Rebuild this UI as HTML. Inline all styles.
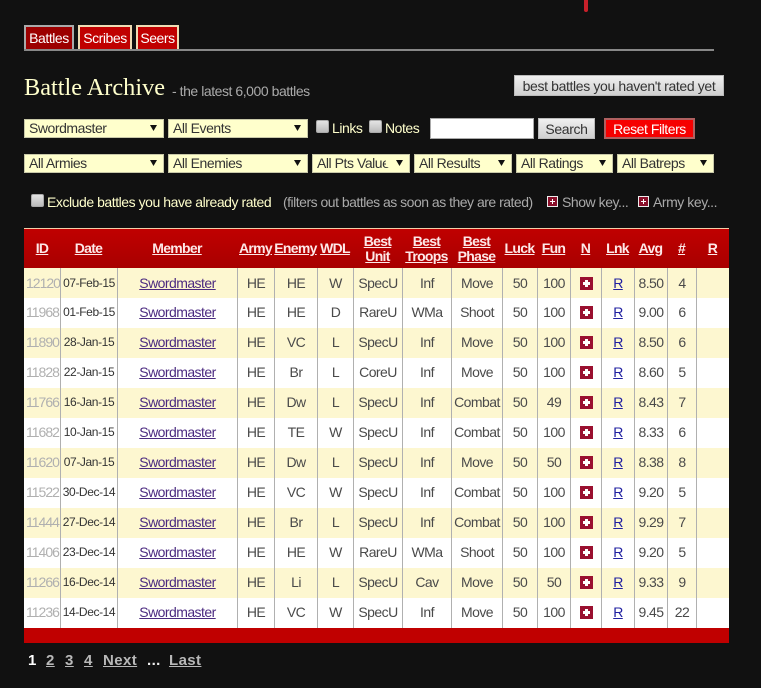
<!DOCTYPE html>
<html>
<head>
<meta charset="utf-8">
<style>
html,body{margin:0;padding:0;background:#111;}
body{width:761px;height:688px;position:relative;overflow:hidden;font-family:"Liberation Sans",sans-serif;font-size:14px;letter-spacing:-.45px;color:#333;}
.a{position:absolute;white-space:nowrap;box-sizing:border-box;}
.tab{top:25px;height:24px;line-height:22px;color:#fff;font-size:14px;text-align:center;background:#c00000;border:2px solid #efdcb4;border-bottom:0;}
.sel{height:19px;background:#ffffcc;border:1px solid #c8c8a8;color:#333;font-size:14px;line-height:17px;padding-left:4px;overflow:hidden;}
.sel svg{position:absolute;right:6px;top:4px;background:#ffffcc;}
.chk{width:13px;height:13px;background:linear-gradient(#e4e4e4,#bbb);border:1px solid #aaa;border-radius:2px;}
.lbl{color:#ffffcc;font-size:14px;line-height:16px;}
.gray{color:#aaa;font-size:14px;line-height:16px;}
.btn{background:linear-gradient(#f0f0f0,#cfcfcf);border:1px solid #bbb;color:#333;font-size:14px;text-align:center;letter-spacing:-.36px;}
.pl{width:11px;height:11px;background:#8a0f2a;border:1px solid #eee;box-sizing:border-box;}
.pl:before,.pl:after{content:"";position:absolute;background:#fff;}
.pl:before{left:2px;top:4px;width:5px;height:1px;}
.pl:after{left:4px;top:2px;width:1px;height:5px;}
table{position:absolute;left:24px;top:228px;width:705px;border-collapse:separate;border-spacing:0;table-layout:fixed;}
th{height:39px;padding:0;background:linear-gradient(#c00000,#a80000);border-top:1px solid #f2cfa8;color:#fde8e8;font-size:14px;letter-spacing:-.7px;line-height:15px;text-decoration:underline;font-weight:bold;}
td{height:30px;padding:0;text-align:center;border-left:1px solid #b0b0b0;font-size:14px;letter-spacing:-.55px;color:#4a4a4a;white-space:nowrap;overflow:visible;box-sizing:border-box;}
tbody tr:not(:first-child) td{padding-bottom:2px;}
td:first-child{border-left:0;color:#b0b0b0;font-size:14px;letter-spacing:-1px;text-align:left;padding-left:2px;}
tr.o td{background:#fdf7d0;}
tr.e td{background:#fff;}
td.d{font-size:12px;letter-spacing:-.4px;color:#333;}
td.m{color:#4b2a80;text-decoration:underline;}
td.r{color:#2020a0;text-decoration:underline;}
.n{display:inline-block;width:13px;height:13px;background:#9a1030;position:relative;vertical-align:-2px;}
.n:before,.n:after{content:"";position:absolute;background:#fff;}
.n:before{left:3px;top:5px;width:7px;height:3px;}
.n:after{left:5px;top:3px;width:3px;height:7px;}
tfoot td{height:15px;background:#c00000;border:0!important;}
.pg{top:652px;font-size:15px;font-weight:bold;color:#b8b8b8;text-decoration:underline;letter-spacing:.4px;}
</style>
</head>
<body>
<div class="a" style="left:584px;top:0;width:4px;height:12px;background:#c8202a;border-radius:0 0 2px 2px;"></div>

<div class="a tab" style="left:24px;width:50px;background:#9c0000;border-color:#aaa;">Battles</div>
<div class="a tab" style="left:78px;width:54px;">Scribes</div>
<div class="a tab" style="left:136px;width:43px;">Seers</div>
<div class="a" style="left:24px;top:49px;width:690px;height:2px;background:#888;"></div>

<div class="a" style="left:24px;top:73px;font-family:'Liberation Serif',serif;font-size:24.3px;letter-spacing:0;line-height:30px;color:#ffffcc;">Battle Archive</div>
<div class="a gray" style="left:172px;top:83px;">- the latest 6,000 battles</div>
<div class="a btn" style="left:514px;top:75px;width:210px;height:21px;line-height:20px;">best battles you haven't rated yet</div>

<div class="a sel" style="left:24px;top:119px;width:140px;">Swordmaster<svg width="7" height="8"><path d="M0 1h7l-3.500 6z" fill="#111"/></svg></div>
<div class="a sel" style="left:168px;top:119px;width:140px;">All Events<svg width="7" height="8"><path d="M0 1h7l-3.500 6z" fill="#111"/></svg></div>
<div class="a chk" style="left:316px;top:120px;"></div>
<div class="a lbl" style="left:332px;top:120px;">Links</div>
<div class="a chk" style="left:369px;top:120px;"></div>
<div class="a lbl" style="left:385px;top:120px;">Notes</div>
<div class="a" style="left:430px;top:118px;width:104px;height:21px;background:#fff;border:1px solid #aaa;"></div>
<div class="a btn" style="left:538px;top:118px;width:57px;height:21px;line-height:20px;">Search</div>
<div class="a" style="left:604px;top:118px;width:91px;height:21px;line-height:18px;background:#f60000;border:2px solid #b06060;color:#fff;font-size:14px;text-align:center;">Reset Filters</div>

<div class="a sel" style="left:24px;top:154px;width:140px;">All Armies<svg width="7" height="8"><path d="M0 1h7l-3.500 6z" fill="#111"/></svg></div>
<div class="a sel" style="left:168px;top:154px;width:140px;">All Enemies<svg width="7" height="8"><path d="M0 1h7l-3.500 6z" fill="#111"/></svg></div>
<div class="a sel" style="left:312px;top:154px;width:98px;">All Pts Value<svg width="17" height="8"><path d="M10 1h7l-3.500 6z" fill="#111"/></svg></div>
<div class="a sel" style="left:414px;top:154px;width:98px;">All Results<svg width="7" height="8"><path d="M0 1h7l-3.500 6z" fill="#111"/></svg></div>
<div class="a sel" style="left:516px;top:154px;width:97px;">All Ratings<svg width="7" height="8"><path d="M0 1h7l-3.500 6z" fill="#111"/></svg></div>
<div class="a sel" style="left:617px;top:154px;width:97px;">All Batreps<svg width="7" height="8"><path d="M0 1h7l-3.500 6z" fill="#111"/></svg></div>

<div class="a chk" style="left:31px;top:194px;"></div>
<div class="a lbl" style="left:47px;top:194px;">Exclude battles you have already rated</div>
<div class="a gray" style="left:283px;top:194px;letter-spacing:-.5px;">(filters out battles as soon as they are rated)</div>
<div class="a pl" style="left:547px;top:196px;"></div>
<div class="a gray" style="left:562px;top:194px;">Show key...</div>
<div class="a pl" style="left:638px;top:196px;"></div>
<div class="a gray" style="left:653px;top:194px;">Army key...</div>

<table>
<colgroup><col style="width:36px"><col style="width:57px"><col style="width:120px"><col style="width:37px"><col style="width:43px"><col style="width:36px"><col style="width:49px"><col style="width:49px"><col style="width:51px"><col style="width:35px"><col style="width:33px"><col style="width:31px"><col style="width:33px"><col style="width:33px"><col style="width:29px"><col style="width:33px"></colgroup>
<thead><tr><th>ID</th><th>Date</th><th>Member</th><th>Army</th><th>Enemy</th><th>WDL</th><th>Best<br>Unit</th><th>Best<br>Troops</th><th>Best<br>Phase</th><th>Luck</th><th>Fun</th><th>N</th><th>Lnk</th><th>Avg</th><th>#</th><th>R</th></tr></thead>
<tbody>
<tr class="o"><td>12120</td><td class="d">07-Feb-15</td><td class="m">Swordmaster</td><td>HE</td><td>HE</td><td>W</td><td>SpecU</td><td>Inf</td><td>Move</td><td>50</td><td>100</td><td><i class="n"></i></td><td class="r">R</td><td>8.50</td><td>4</td><td></td></tr>
<tr class="e"><td>11968</td><td class="d">01-Feb-15</td><td class="m">Swordmaster</td><td>HE</td><td>HE</td><td>D</td><td>RareU</td><td>WMa</td><td>Shoot</td><td>50</td><td>100</td><td><i class="n"></i></td><td class="r">R</td><td>9.00</td><td>6</td><td></td></tr>
<tr class="o"><td>11890</td><td class="d">28-Jan-15</td><td class="m">Swordmaster</td><td>HE</td><td>VC</td><td>L</td><td>SpecU</td><td>Inf</td><td>Move</td><td>50</td><td>100</td><td><i class="n"></i></td><td class="r">R</td><td>8.50</td><td>6</td><td></td></tr>
<tr class="e"><td>11828</td><td class="d">22-Jan-15</td><td class="m">Swordmaster</td><td>HE</td><td>Br</td><td>L</td><td>CoreU</td><td>Inf</td><td>Move</td><td>50</td><td>100</td><td><i class="n"></i></td><td class="r">R</td><td>8.60</td><td>5</td><td></td></tr>
<tr class="o"><td>11766</td><td class="d">16-Jan-15</td><td class="m">Swordmaster</td><td>HE</td><td>Dw</td><td>L</td><td>SpecU</td><td>Inf</td><td>Combat</td><td>50</td><td>49</td><td><i class="n"></i></td><td class="r">R</td><td>8.43</td><td>7</td><td></td></tr>
<tr class="e"><td>11682</td><td class="d">10-Jan-15</td><td class="m">Swordmaster</td><td>HE</td><td>TE</td><td>W</td><td>SpecU</td><td>Inf</td><td>Combat</td><td>50</td><td>100</td><td><i class="n"></i></td><td class="r">R</td><td>8.33</td><td>6</td><td></td></tr>
<tr class="o"><td>11620</td><td class="d">07-Jan-15</td><td class="m">Swordmaster</td><td>HE</td><td>Dw</td><td>L</td><td>SpecU</td><td>Inf</td><td>Move</td><td>50</td><td>50</td><td><i class="n"></i></td><td class="r">R</td><td>8.38</td><td>8</td><td></td></tr>
<tr class="e"><td>11522</td><td class="d">30-Dec-14</td><td class="m">Swordmaster</td><td>HE</td><td>VC</td><td>W</td><td>SpecU</td><td>Inf</td><td>Combat</td><td>50</td><td>100</td><td><i class="n"></i></td><td class="r">R</td><td>9.20</td><td>5</td><td></td></tr>
<tr class="o"><td>11444</td><td class="d">27-Dec-14</td><td class="m">Swordmaster</td><td>HE</td><td>Br</td><td>L</td><td>SpecU</td><td>Inf</td><td>Combat</td><td>50</td><td>100</td><td><i class="n"></i></td><td class="r">R</td><td>9.29</td><td>7</td><td></td></tr>
<tr class="e"><td>11406</td><td class="d">23-Dec-14</td><td class="m">Swordmaster</td><td>HE</td><td>HE</td><td>W</td><td>RareU</td><td>WMa</td><td>Shoot</td><td>50</td><td>100</td><td><i class="n"></i></td><td class="r">R</td><td>9.20</td><td>5</td><td></td></tr>
<tr class="o"><td>11266</td><td class="d">16-Dec-14</td><td class="m">Swordmaster</td><td>HE</td><td>Li</td><td>L</td><td>SpecU</td><td>Cav</td><td>Move</td><td>50</td><td>50</td><td><i class="n"></i></td><td class="r">R</td><td>9.33</td><td>9</td><td></td></tr>
<tr class="e"><td>11236</td><td class="d">14-Dec-14</td><td class="m">Swordmaster</td><td>HE</td><td>VC</td><td>W</td><td>SpecU</td><td>Inf</td><td>Move</td><td>50</td><td>100</td><td><i class="n"></i></td><td class="r">R</td><td>9.45</td><td>22</td><td></td></tr>
</tbody>
<tfoot><tr><td colspan="16" style="padding:0"></td></tr></tfoot>
</table>

<div class="a pg" style="left:28px;color:#fff;text-decoration:none;">1</div>
<div class="a pg" style="left:46px;">2</div>
<div class="a pg" style="left:65px;">3</div>
<div class="a pg" style="left:84px;">4</div>
<div class="a pg" style="left:103px;">Next</div>
<div class="a pg" style="left:147px;color:#eee;text-decoration:none;">...</div>
<div class="a pg" style="left:169px;">Last</div>
</body>
</html>
